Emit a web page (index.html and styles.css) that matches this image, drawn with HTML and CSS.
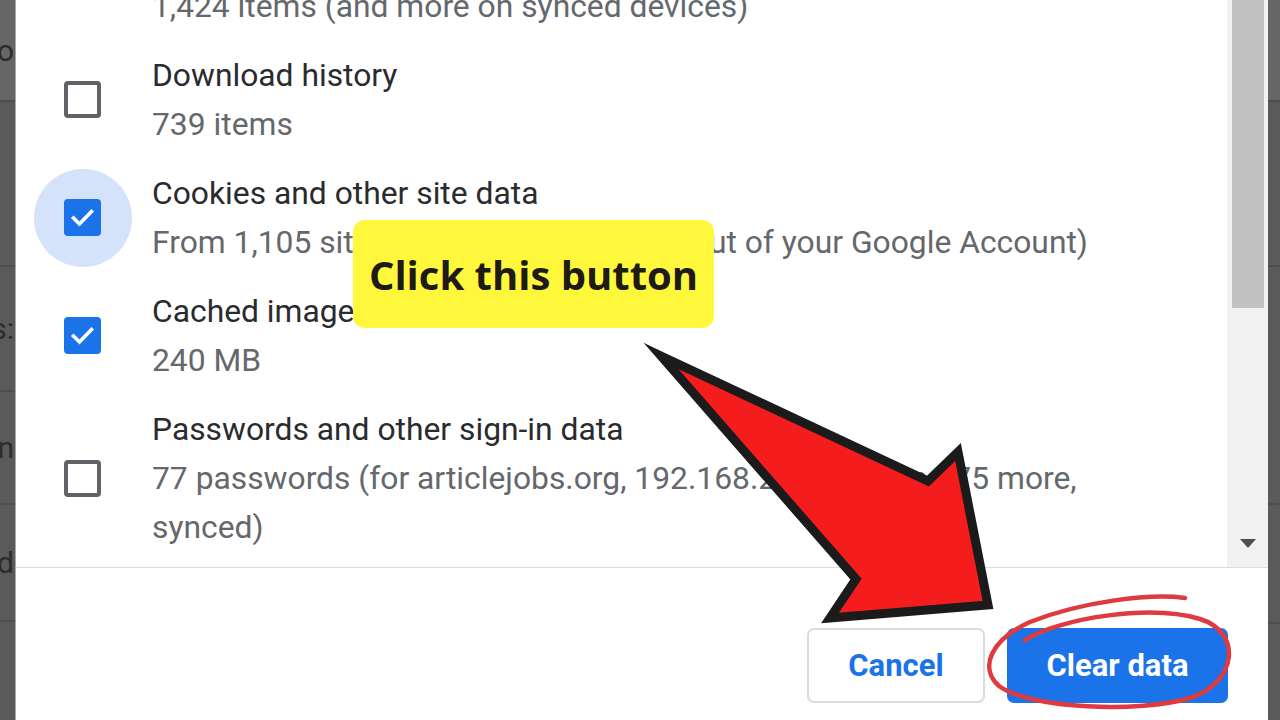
FILE: index.html
```html
<!DOCTYPE html>
<html lang="en">
<head>
<meta charset="utf-8">
<title>Clear browsing data</title>
<link rel="stylesheet" href="styles.css">
</head>
<body>
<div class="screen">
  <aside class="backdrop left">
    <div class="bd-row head"><span>o</span></div>
    <div class="bd-row l2"></div>
    <div class="bd-row l3"><span>s:</span></div>
    <div class="bd-row l4"><span>yn</span></div>
    <div class="bd-row l5"><span>d</span></div>
    <div class="bd-row last"></div>
  </aside>

  <main class="dialog">
    <div class="body">
      <div class="list-wrap">
        <ul class="list">
          <li class="item">
            <div class="check-cell"><div class="box"></div></div>
            <div class="text">
              <div class="title">Browsing history</div>
              <div class="sub">1,424 items (and more on synced devices)</div>
            </div>
          </li>
          <li class="item">
            <div class="check-cell"><div class="box"></div></div>
            <div class="text">
              <div class="title">Download history</div>
              <div class="sub">739 items</div>
            </div>
          </li>
          <li class="item">
            <div class="check-cell focused"><div class="box checked"><svg viewBox="0 0 37 37" class="tick"><polyline points="9.5,19 15.5,25 27.5,12.5"/></svg></div></div>
            <div class="text">
              <div class="title">Cookies and other site data</div>
              <div class="sub">From 1,105 sites (you won't be signed out of your Google Account)</div>
            </div>
          </li>
          <li class="item">
            <div class="check-cell"><div class="box checked"><svg viewBox="0 0 37 37" class="tick"><polyline points="9.5,19 15.5,25 27.5,12.5"/></svg></div></div>
            <div class="text">
              <div class="title">Cached images and files</div>
              <div class="sub">240 MB</div>
            </div>
          </li>
          <li class="item">
            <div class="check-cell"><div class="box"></div></div>
            <div class="text">
              <div class="title">Passwords and other sign-in data</div>
              <div class="sub">77 passwords (for articlejobs.org, 192.168.2.1, 10.1, and 75 more, synced)</div>
            </div>
          </li>
        </ul>
      </div>
      <div class="scrollbar">
        <div class="thumb"></div>
        <div class="arrow-down"></div>
      </div>
    </div>
    <div class="footer">
      <button class="btn cancel">Cancel</button>
      <button class="btn primary">Clear data</button>
    </div>
  </main>

  <aside class="backdrop right">
    <div class="bd-row head"></div>
    <div class="bd-row l2"></div>
    <div class="bd-row r3"></div>
    <div class="bd-row r4"></div>
    <div class="bd-row last"></div>
  </aside>

  <div class="callout">Click this button</div>

  <svg class="annot" viewBox="0 0 1280 720" width="1280" height="720">
    <polygon class="arrow" points="661,356 928,481 958,452 988,605 830,618 856,579"/>
    <path class="loop" d="M1025,640 C1060,618 1150,604 1200,619 C1242,632 1238,682 1190,698 C1140,713 1030,709 999,686 C979,668 990,640 1030,622 C1080,602 1150,593 1185,598"/>
  </svg>
</div>
</body>
</html>
```

FILE: styles.css
```css
html, body {
  margin: 0;
  padding: 0;
  width: 1280px;
  height: 720px;
  overflow: hidden;
}

.screen {
  position: relative;
  width: 1280px;
  height: 720px;
  display: flex;
  background: #5a5a5a;
  font-family: Roboto, "Liberation Sans", Arial, sans-serif;
}

/* dimmed page behind the dialog */
.backdrop {
  display: flex;
  flex-direction: column;
  overflow: hidden;
  background: #5a5a5a;
  flex: none;
}
.backdrop.left { width: 15px; }
.backdrop.right { width: 12px; }

.bd-row {
  display: flex;
  align-items: center;
  justify-content: flex-end;
  border-bottom: 2px solid #4e4e4e;
  font-size: 30px;
  color: #2c2c2c;
  white-space: nowrap;
  overflow: hidden;
  flex: none;
}
.bd-row.head { height: 100px; background: #666666; }
.bd-row.l2 { height: 163px; }
.bd-row.l3 { height: 123px; }
.bd-row.l4 { height: 111px; }
.bd-row.l5 { height: 115px; }
.bd-row.r3 { height: 236px; }
.bd-row.r4 { height: 117px; }
.bd-row.last { flex: 1; border-bottom: 0; }
.bd-row span { padding-right: 1px; }

/* dialog */
.dialog {
  flex: 1;
  background: #ffffff;
  display: flex;
  flex-direction: column;
  border-left: 1px solid #a9a9a9;
}

.body {
  height: 567px;
  display: flex;
  overflow: hidden;
  flex: none;
}

.list-wrap {
  flex: 1;
  overflow: hidden;
}

.list {
  list-style: none;
  margin: -67.5px 0 0;
  padding: 0 96px 0 48px;
  display: flex;
  flex-direction: column;
  gap: 20px;
}

.item {
  display: flex;
  align-items: center;
  gap: 51px;
}

.check-cell {
  position: relative;
  width: 37px;
  height: 37px;
  flex: none;
}
.check-cell.focused::before {
  content: "";
  position: absolute;
  left: 50%;
  top: 50%;
  width: 98px;
  height: 98px;
  margin: -49px 0 0 -49px;
  border-radius: 50%;
  background: #d4e3fa;
}

.box {
  position: relative;
  z-index: 1;
  width: 37px;
  height: 37px;
  box-sizing: border-box;
  border: 4px solid #5f6368;
  border-radius: 4px;
  background: #ffffff;
}
.box.checked {
  background: #1a73e8;
  border-color: #1a73e8;
  border-width: 0;
}
.tick {
  display: block;
  width: 37px;
  height: 37px;
}
.tick polyline {
  fill: none;
  stroke: #ffffff;
  stroke-width: 3.6;
  stroke-linecap: square;
}

.text {
  font-size: 31.8px;
  line-height: 49px;
}
.title { color: #2a2b2e; }
.sub { color: #64686d; }

/* scrollbar */
.scrollbar {
  width: 41px;
  flex: none;
  background: #f1f1f1;
  display: flex;
  flex-direction: column;
  align-items: center;
}
.thumb {
  align-self: flex-start;
  margin-left: 5px;
  width: 32px;
  height: 308px;
  background: #c1c1c1;
}
.arrow-down {
  margin-top: auto;
  margin-bottom: 19px;
  width: 0;
  height: 0;
  border-left: 8px solid transparent;
  border-right: 8px solid transparent;
  border-top: 9px solid #4d4d4d;
}

/* footer */
.footer {
  flex: 1;
  border-top: 1px solid #dadce0;
  display: flex;
  justify-content: flex-end;
  align-items: flex-start;
  gap: 22px;
  padding: 60px 40px 0 0;
}
.btn {
  height: 75px;
  border-radius: 7px;
  font-family: Roboto, "Liberation Sans", Arial, sans-serif;
  font-size: 31px;
  font-weight: 700;
  padding: 0;
  box-sizing: border-box;
}
.btn.cancel {
  width: 178px;
  background: #ffffff;
  border: 2px solid #dadce0;
  color: #1a73e8;
}
.btn.primary {
  width: 221px;
  background: #1a73e8;
  border: 0;
  color: #ffffff;
}

/* annotations */
.callout {
  position: absolute;
  left: 353px;
  top: 220px;
  width: 361px;
  height: 108px;
  border-radius: 12px;
  background: #fff73b;
  color: #1e1b16;
  font-family: "Open Sans", "Noto Sans", sans-serif;
  font-weight: 700;
  font-size: 40px;
  display: flex;
  align-items: center;
  justify-content: center;
}

.annot {
  position: absolute;
  left: 0;
  top: 0;
  pointer-events: none;
}
.arrow {
  fill: #f41c1c;
  stroke: #1b1b1b;
  stroke-width: 9;
  stroke-linejoin: miter;
  stroke-miterlimit: 10;
}
.loop {
  fill: none;
  stroke: #df3a40;
  stroke-width: 4.5;
  stroke-linecap: round;
}
```
